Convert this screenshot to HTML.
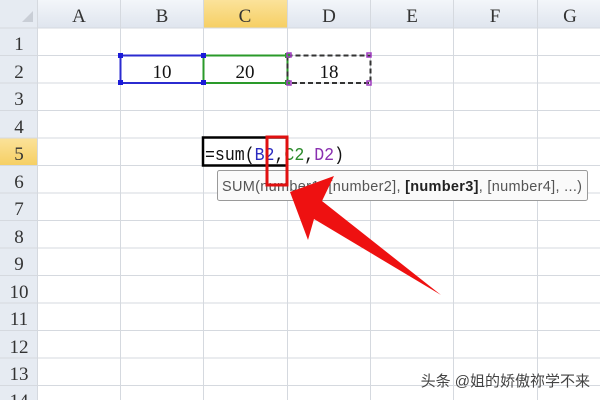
<!DOCTYPE html>
<html><head><meta charset="utf-8"><style>
html,body{margin:0;padding:0;width:600px;height:400px;overflow:hidden;background:#fff}
</style></head><body>
<svg width="600" height="400" xmlns="http://www.w3.org/2000/svg" style="position:absolute;left:0;top:0">
<defs>
<linearGradient id="hg" x1="0" y1="0" x2="0" y2="1"><stop offset="0" stop-color="#f3f6fa"/><stop offset="1" stop-color="#dfe5ee"/></linearGradient>
<linearGradient id="yg" x1="0" y1="0" x2="0" y2="1"><stop offset="0" stop-color="#fbe29a"/><stop offset="1" stop-color="#f6cf63"/></linearGradient>
</defs>
<rect x="0" y="0" width="600" height="28" fill="url(#hg)"/>
<rect x="0" y="0" width="37" height="400" fill="#e6ebf2"/>
<rect x="203" y="0" width="84" height="28" fill="url(#yg)"/>
<rect x="0" y="138" width="37" height="27.5" fill="url(#yg)"/>
<polygon points="22,22 33,22 33,11" fill="#c9ced6"/>
<g stroke="#d5d9df" stroke-width="1">
<line x1="37.5" y1="0" x2="37.5" y2="400"/><line x1="120.5" y1="0" x2="120.5" y2="400"/><line x1="203.5" y1="0" x2="203.5" y2="400"/><line x1="287.5" y1="0" x2="287.5" y2="400"/><line x1="370.5" y1="0" x2="370.5" y2="400"/><line x1="453.5" y1="0" x2="453.5" y2="400"/><line x1="537.5" y1="0" x2="537.5" y2="400"/>
<line x1="0" y1="28" x2="600" y2="28"/>
<line x1="0" y1="55.5" x2="600" y2="55.5"/><line x1="0" y1="83" x2="600" y2="83"/><line x1="0" y1="110.5" x2="600" y2="110.5"/><line x1="0" y1="138" x2="600" y2="138"/><line x1="0" y1="165.5" x2="600" y2="165.5"/><line x1="0" y1="193" x2="600" y2="193"/><line x1="0" y1="220.5" x2="600" y2="220.5"/><line x1="0" y1="248" x2="600" y2="248"/><line x1="0" y1="275.5" x2="600" y2="275.5"/><line x1="0" y1="303" x2="600" y2="303"/><line x1="0" y1="330.5" x2="600" y2="330.5"/><line x1="0" y1="358" x2="600" y2="358"/><line x1="0" y1="385.5" x2="600" y2="385.5"/>
</g>
<g font-family="Liberation Serif, serif" font-size="19" fill="#333" text-anchor="middle">
<text x="79" y="22">A</text><text x="162" y="22">B</text><text x="245" y="22">C</text><text x="329" y="22">D</text><text x="412" y="22">E</text><text x="495" y="22">F</text><text x="570" y="22">G</text>
<text x="19" y="50">1</text><text x="19" y="78">2</text><text x="19" y="105">3</text><text x="19" y="133">4</text><text x="19" y="160">5</text><text x="19" y="188">6</text><text x="19" y="215">7</text><text x="19" y="243">8</text><text x="19" y="270">9</text><text x="19" y="298">10</text><text x="19" y="325">11</text><text x="19" y="353">12</text><text x="19" y="380">13</text><text x="19" y="407">14</text>
<text x="162" y="78" fill="#111">10</text><text x="245" y="78" fill="#111">20</text><text x="329" y="78" fill="#111">18</text>
</g>
<rect x="120.5" y="55.5" width="83" height="27.5" fill="none" stroke="#2b2bd0" stroke-width="2"/>
<rect x="203.5" y="55.5" width="84" height="27.5" fill="none" stroke="#2a9a2a" stroke-width="2"/>
<rect x="287.5" y="55.5" width="83" height="27.5" fill="none" stroke="#333" stroke-width="2" stroke-dasharray="5,3"/>
<g fill="#1a1ad8"><rect x="118" y="53" width="5" height="5"/><rect x="118" y="80" width="5" height="5"/><rect x="201" y="53" width="5" height="5"/><rect x="201" y="80" width="5" height="5"/></g>
<g fill="#2a9a2a"><rect x="285" y="53" width="5" height="5"/><rect x="285" y="80" width="5" height="5"/></g>
<g fill="none" stroke="#a03cc0" stroke-width="1.5"><rect x="287" y="53" width="4" height="4"/><rect x="287" y="81" width="4" height="4"/><rect x="367" y="53" width="4" height="4"/><rect x="367" y="81" width="4" height="4"/></g>
<rect x="203" y="137.5" width="84" height="28" fill="#fff" stroke="#000" stroke-width="2.5"/>
<text x="205" y="160" font-family="Liberation Mono, monospace" font-size="18" textLength="139" lengthAdjust="spacingAndGlyphs" fill="#111">=sum(<tspan fill="#2b2bc0">B2</tspan>,<tspan fill="#2a8a2a">C2</tspan>,<tspan fill="#8a2fb0">D2</tspan>)</text>
<rect x="217.5" y="170.5" width="370" height="30" rx="2" fill="#fafafa" stroke="#9a9a9a"/>
<text x="222" y="191" font-family="Liberation Sans, sans-serif" font-size="14.5" fill="#555" textLength="360">SUM(number1, [number2], <tspan font-weight="bold" fill="#222">[number3]</tspan>, [number4], ...)</text>
<rect x="267" y="137" width="20" height="48" fill="none" stroke="#e01010" stroke-width="3"/>
<polygon points="290,192 334,176 322,201 441,295 314,219 308,240" fill="#ee1111"/>
<text x="590" y="386" text-anchor="end" font-family="Liberation Sans, 'Noto Sans CJK SC', sans-serif" font-size="15" fill="#444">头条 @姐的娇傲祢学不来</text>
</svg>
</body></html>
